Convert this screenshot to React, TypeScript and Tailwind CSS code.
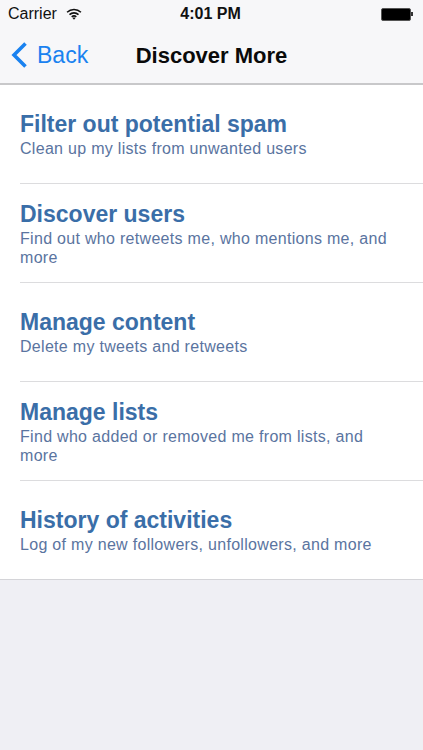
import React from 'react';

const rows = [
  { title: 'Filter out potential spam', sub: 'Clean up my lists from unwanted users' },
  { title: 'Discover users', sub: 'Find out who retweets me, who mentions me, and more' },
  { title: 'Manage content', sub: 'Delete my tweets and retweets' },
  { title: 'Manage lists', sub: 'Find who added or removed me from lists, and more' },
  { title: 'History of activities', sub: 'Log of my new followers, unfollowers, and more' },
];

const Wifi = () => (
  <svg width="16" height="12" viewBox="0 0 17 13" fill="none" stroke="#111" strokeWidth="1.7">
    <path d="M1 4.6C5.2.6 11.8.6 16 4.6" />
    <path d="M3.6 7.2c2.8-2.6 7-2.6 9.8 0" />
    <path d="M6 9.6c1.4-1.2 3.6-1.2 5 0" />
    <path d="M8.5 12.6l-1.6-1.7c.9-.7 2.3-.7 3.2 0z" fill="#111" stroke="none" />
  </svg>
);

const Battery = () => (
  <div className="flex items-center justify-end">
    <div className="w-[30px] h-[13px] rounded-[2px] bg-black border border-[#555]" />
    <div className="w-[2px] h-[4px] bg-[#333]" />
  </div>
);

export default function App() {
  return (
    <div className="w-[423px] h-[750px] flex flex-col bg-[#efeff4] font-['Liberation_Sans',Arial,sans-serif] overflow-hidden">
      <div className="h-[85px] shrink-0 bg-[#f7f7f9] border-b-2 border-[#c8c8ca] flex flex-col">
        <div className="h-[28px] grid grid-cols-[1fr_auto_1fr] items-center pl-[8px] pr-[10px] text-[#111]">
          <div className="flex items-center gap-[9px]">
            <span className="text-[16px]">Carrier</span>
            <Wifi />
          </div>
          <span className="text-[16px] font-bold">4:01 PM</span>
          <Battery />
        </div>
        <div className="flex-1 relative flex items-center justify-center">
          <div className="absolute left-[11px] top-[14px] flex items-center gap-[10px] text-[#1a82f0]">
            <svg width="16" height="26" viewBox="0 0 16 26" fill="none" stroke="#1a82f0" strokeWidth="3.6">
              <path d="M14.5 1.5L3 13l11.5 11.5" />
            </svg>
            <span className="text-[23px] leading-none">Back</span>
          </div>
          <span className="text-[22px] font-bold text-[#0a0a0a]">Discover More</span>
        </div>
      </div>
      <div className="bg-white border-b border-[#d4d4d8] pl-[20px]">
        {rows.map((r, i) => (
          <div
            key={r.title}
            className={`flex flex-col justify-center pr-[30px] ${i < rows.length - 1 ? 'h-[99px] border-b border-[#dcdcde]' : 'h-[98px]'}`}
          >
            <div className="text-[23px] leading-[28px] font-bold text-[#3a6ea8]">{r.title}</div>
            <div className="text-[16px] leading-[19px] mt-[1px] text-[#5a74a0] tracking-[0.3px]">{r.sub}</div>
          </div>
        ))}
      </div>
    </div>
  );
}
